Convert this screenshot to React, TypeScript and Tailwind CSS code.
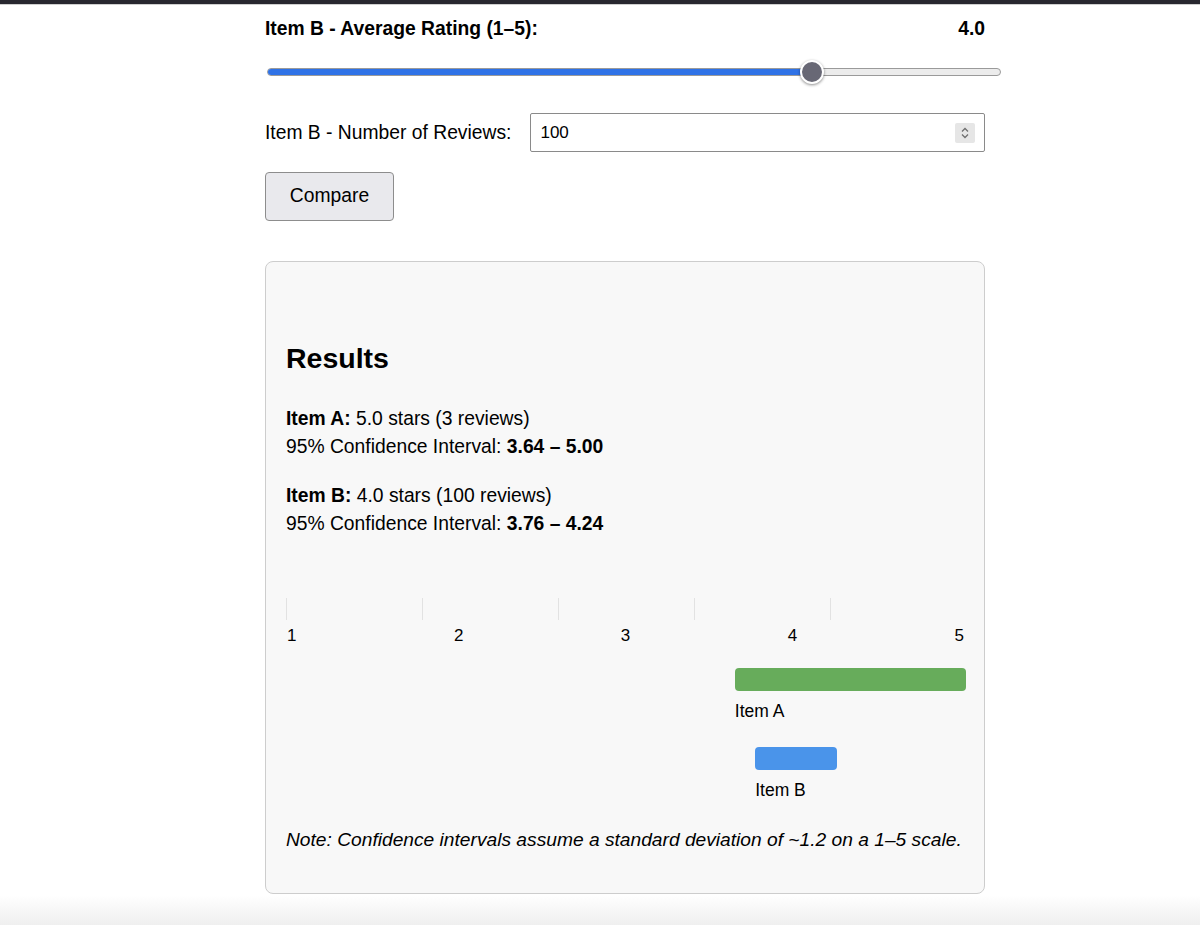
const RATING = 4.0;
const AXIS_MIN = 1;
const AXIS_MAX = 5;

const ITEMS = [
  { name: 'Item A', stars: '5.0', reviews: 3, low: 3.64, high: 5.0, color: 'bg-[#67ac5b]' },
  { name: 'Item B', stars: '4.0', reviews: 100, low: 3.76, high: 4.24, color: 'bg-[#4a94ea]' },
];

const pct = (v: number) => ((v - AXIS_MIN) / (AXIS_MAX - AXIS_MIN)) * 100;

function RatingSlider({ value }: { value: number }) {
  const p = (value - 1) / 4;
  return (
    <div className="relative h-6 w-[734px] ml-[2px] mt-[20px]">
      <div className="absolute left-0 right-0 top-[8px] h-[8px] rounded-full border border-[#9a9a9a] bg-[#ececec] overflow-hidden">
        <div className="h-full bg-[#2f72e6]" style={{ width: `calc(${p * 100}% - ${p * 24 - 12}px)` }} />
      </div>
      <div
        className="absolute top-0 h-6 w-6 rounded-full bg-[#686875] border-2 border-white shadow-[0_1px_3px_rgba(0,0,0,0.45)]"
        style={{ left: `calc(${p * 100}% - ${p * 24}px)` }}
      />
    </div>
  );
}

export default function App() {
  return (
    <div className="min-h-[925px] bg-white flex flex-col text-black font-['Liberation_Sans',Arial,sans-serif]">
      <div className="h-[4px] bg-[#28272f]" />
      <div className="h-px bg-[#cfcfcf]" />

      <div className="ml-[265px] w-[720px] flex-1">
        <div className="mt-[13px] flex justify-between text-[19.3px] leading-[22px] font-bold">
          <span>Item B - Average Rating (1–5):</span>
          <span>{RATING.toFixed(1)}</span>
        </div>

        <RatingSlider value={RATING} />

        <div className="mt-[29px] flex items-center">
          <label className="text-[19.3px] leading-[22px] mr-[19px]">Item B - Number of Reviews:</label>
          <div className="flex-1 h-[39px] flex items-center justify-between border border-[#8a8a8a] rounded-[2px] bg-white pl-[9px] pr-[9px]">
            <span className="text-[17px]">100</span>
            <span className="w-[20px] h-[20px] bg-[#e6e6e6] rounded-[2px] flex flex-col items-center justify-center">
              <svg width="10" height="14" viewBox="0 0 10 14" fill="none" stroke="#6f6f6f" strokeWidth="1.3">
                <path d="M2 5.5 L5 2.5 L8 5.5" />
                <path d="M2 8.5 L5 11.5 L8 8.5" />
              </svg>
            </span>
          </div>
        </div>

        <button
          type="button"
          className="mt-[20px] w-[129px] h-[49px] bg-[#e9e9ed] border border-[#8d8d8d] rounded-[4px] text-[19.3px]"
        >
          Compare
        </button>

        <div className="mt-[40px] h-[633px] bg-[#f8f8f8] border border-[#cdcdcd] rounded-[8px] px-[20px] pt-[79px]">
          <h2 className="text-[28.5px] leading-[34px] font-bold">Results</h2>

          <div className="mt-[30px] flex flex-col gap-[21px] text-[19.3px] leading-[28px]">
            {ITEMS.map((it) => (
              <div key={it.name}>
                <div>
                  <b>{it.name}:</b> {it.stars} stars ({it.reviews} reviews)
                </div>
                <div>
                  95% Confidence Interval: <b>{it.low.toFixed(2)} – {it.high.toFixed(2)}</b>
                </div>
              </div>
            ))}
          </div>

          <div className="mt-[60px] w-[680px]">
            <div className="relative h-[22px]">
              {[0, 20, 40, 60, 80].map((x) => (
                <div key={x} className="absolute top-0 h-full w-px bg-[#e2e2e2]" style={{ left: `${x}%` }} />
              ))}
            </div>
            <div className="mt-[6px] flex justify-between text-[17px] leading-[20px] pl-[1px] pr-[2px]">
              {[1, 2, 3, 4, 5].map((n) => (
                <span key={n}>{n}</span>
              ))}
            </div>

            <div className="mt-[22px] flex flex-col gap-[26px]">
              {ITEMS.map((it) => (
                <div key={it.name} style={{ marginLeft: `${pct(it.low)}%`, width: `${pct(it.high) - pct(it.low)}%` }}>
                  <div className={`h-[23px] rounded-[4px] ${it.color}`} />
                  <div className="mt-[10px] text-[17.5px] leading-[20px] whitespace-nowrap">{it.name}</div>
                </div>
              ))}
            </div>
          </div>

          <p className="mt-[26px] italic text-[19.2px] leading-[28px] whitespace-nowrap">
            Note: Confidence intervals assume a standard deviation of ~1.2 on a 1–5 scale.
          </p>
        </div>
      </div>

      <div className="h-[30px] bg-gradient-to-b from-white to-[#efefef]" />
    </div>
  );
}
